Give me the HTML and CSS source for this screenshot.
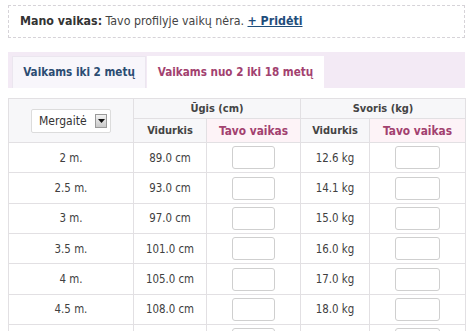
FILE: index.html
```html
<!DOCTYPE html>
<html lang="lt">
<head>
<meta charset="utf-8">
<title>Ūgis ir svoris</title>
<link rel="stylesheet" href="styles.css">
</head>
<body>
<div class="notice"><b>Mano vaikas:</b> Tavo profilyje vaikų nėra. <a href="#" class="add">+ Pridėti</a></div>
<div class="tabs">
  <div class="tab tab-first">Vaikams iki 2 metų</div>
  <div class="tab tab-active">Vaikams nuo 2 iki 18 metų</div>
</div>
<table class="grid">
  <colgroup>
    <col class="c1"><col class="c2"><col class="c3"><col class="c4"><col class="c5">
  </colgroup>
  <thead>
    <tr class="h1">
      <th rowspan="2" class="selcell">
        <div class="select"><span class="sel-text">Mergaitė</span><span class="sel-btn"><svg width="7" height="4" viewBox="0 0 7 4"><path d="M0 0H7L3.5 4Z" fill="#111"/></svg></span></div>
      </th>
      <th colspan="2" class="group">Ūgis (cm)</th>
      <th colspan="2" class="group">Svoris (kg)</th>
    </tr>
    <tr class="h2">
      <th class="avg">Vidurkis</th>
      <th class="yours">Tavo vaikas</th>
      <th class="avg">Vidurkis</th>
      <th class="yours">Tavo vaikas</th>
    </tr>
  </thead>
  <tbody>
    <tr><td>2 m.</td><td>89.0 cm</td><td><span class="box"></span></td><td>12.6 kg</td><td><span class="box box-w"></span></td></tr>
    <tr><td>2.5 m.</td><td>93.0 cm</td><td><span class="box"></span></td><td>14.1 kg</td><td><span class="box box-w"></span></td></tr>
    <tr><td>3 m.</td><td>97.0 cm</td><td><span class="box"></span></td><td>15.0 kg</td><td><span class="box box-w"></span></td></tr>
    <tr><td>3.5 m.</td><td>101.0 cm</td><td><span class="box"></span></td><td>16.0 kg</td><td><span class="box box-w"></span></td></tr>
    <tr><td>4 m.</td><td>105.0 cm</td><td><span class="box"></span></td><td>17.0 kg</td><td><span class="box box-w"></span></td></tr>
    <tr><td>4.5 m.</td><td>108.0 cm</td><td><span class="box"></span></td><td>18.0 kg</td><td><span class="box box-w"></span></td></tr>
    <tr class="last"><td></td><td></td><td><span class="box"></span></td><td></td><td><span class="box box-w"></span></td></tr>
  </tbody>
</table>
</body>
</html>
```
FILE: styles.css
```css
html, body {
  margin: 0;
  padding: 0;
  background: #fff;
  overflow: hidden;
}
body {
  height: 331px;
  box-sizing: border-box;
  padding: 5px 9px 0 8px;
  font-family: "DejaVu Sans Condensed", "DejaVu Sans", sans-serif;
  color: #444;
}
.notice {
  border: 1px dashed #d6d3d8;
  box-sizing: border-box;
  height: 33px;
  padding: 0 0 0 11px;
  font-size: 12.3px;
  line-height: 31px;
  color: #444;
}
.notice b {
  color: #333;
}
.add {
  color: #1e4d7b;
  font-weight: bold;
  text-decoration: underline;
}
.tabs {
  margin-top: 14px;
  height: 36px;
  box-sizing: border-box;
  background: #f3eaf5;
  padding: 4px 0 0 4px;
  display: flex;
  gap: 1px;
}
.tab {
  height: 32px;
  box-sizing: border-box;
  font-size: 11.6px;
  font-weight: bold;
  line-height: 32px;
  text-align: center;
}
.tab-first {
  width: 134px;
  background: #f8f6fb;
  color: #2c4c72;
  border: 1px solid #ebe6ef;
  border-bottom: none;
  line-height: 31px;
}
.tab-active {
  width: 177px;
  background: #fff;
  color: #a2416f;
}
.grid {
  margin-top: 10px;
  width: 457px;
  table-layout: fixed;
  border-collapse: collapse;
  font-size: 11.4px;
}
.c1 { width: 125px; }
.c2 { width: 73px; }
.c3 { width: 94px; }
.c4 { width: 69px; }
.c5 { width: 96px; }
.grid th, .grid td {
  border: 1px solid #e2e0e3;
  padding: 0;
  text-align: center;
}
.h1 th {
  height: 19px;
  background: #f7f7f9;
  font-weight: bold;
  color: #444;
  font-size: 11px;
}
.h2 th {
  height: 23px;
  font-size: 11px;
}
.selcell {
  background: #f7f7f9;
}
.avg {
  background: #f7f7f9;
  color: #444;
}
.h2 .yours {
  background: #fdf3f7;
  color: #a2416f;
  font-size: 11.8px;
}
.select {
  width: 80px;
  height: 24px;
  margin: 0 auto;
  box-sizing: border-box;
  border: 1px solid #dcdcdc;
  border-radius: 2px;
  background: #fff;
  display: flex;
  align-items: center;
  justify-content: space-between;
  padding: 0 3px 0 7px;
  font-weight: normal;
  font-size: 12px;
  color: #333;
}
.sel-btn {
  width: 12px;
  height: 14px;
  box-sizing: border-box;
  border: 1px solid #9a9a9a;
  background: linear-gradient(#f2f2f2, #c9c9c9);
  display: flex;
  align-items: center;
  justify-content: center;
}
.grid td {
  height: 29.35px;
  color: #404040;
  background: #fff;
}
.box {
  display: inline-block;
  vertical-align: middle;
  width: 43px;
  height: 23px;
  box-sizing: border-box;
  border: 1px solid #cfcfcf;
  border-radius: 3px;
  background: #fff;
}
.box-w {
  width: 45px;
}
```
